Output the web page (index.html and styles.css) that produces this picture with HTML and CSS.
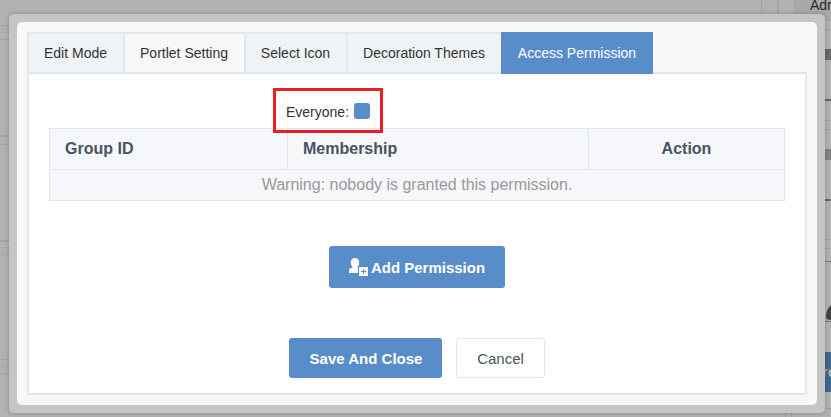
FILE: index.html
```html
<!DOCTYPE html>
<html lang="en">
<head>
<meta charset="utf-8">
<title>Access Permission</title>
<link rel="stylesheet" href="styles.css">
</head>
<body>
<svg class="backdrop" width="831" height="417" viewBox="0 0 831 417" shape-rendering="crispEdges" aria-hidden="true">
  <defs>
    <linearGradient id="bar" x1="0" y1="0" x2="0" y2="1"><stop offset="0" stop-color="#696969"/><stop offset="1" stop-color="#858585"/></linearGradient>
  </defs>
  <g stroke="#9fa4a8" fill="none">
    <path d="M1 25.500h8M2 32.500h7M1 127.500M1 247.500h0M1 247.500h8M2 254.500h7M1 359.500h8M2 366.500h7" stroke-dasharray="3 2"/>
    <path d="M0 39.500h9M0 144.500h9M0 373.500h9"/>
    <path d="M0 136h9M0 241h9" stroke-width="2"/>
    <path d="M761.500 0v14M794.500 0v14M785.500 408v9M791.500 408v9"/>
    <path d="M778 0v14" stroke-width="2"/>
    <path d="M825 20.500h6M825 29.500h6M825 120.500h6M825 129.500h6M825 239.500h6M825 248.500h6M825 408.500h6"/>
  </g>
  <rect x="795" width="36" height="20" fill="#a9a9a9"/>
  <path fill="url(#bar)" d="M825 49h6v11h-6zM825 149h6v11h-6z"/>
  <path stroke="#666" stroke-width="2" d="M825 100h6M825 200h6"/>
  <path stroke="#777" d="M825 261.500h6M825 321.500h6"/>
  <path d="M831 305q-5 4-5 12q0 3 5 3z" fill="#444" shape-rendering="auto"/>
  <rect x="820" y="352" width="11" height="40" fill="#41658e"/>
  <text class="page-heading" x="810" y="10">Adr</text>
  <text class="page-button" x="822" y="377">ro</text>
</svg>
<div class="dialog">
  <div class="dialog-body">
    <nav class="tabs">
      <a class="tab tab-mode">Edit Mode</a>
      <a class="tab tab-setting">Portlet Setting</a>
      <a class="tab tab-icon">Select Icon</a>
      <a class="tab tab-themes">Decoration Themes</a>
      <a class="tab tab-active">Access Permission</a>
    </nav>
    <main class="panel">
      <label class="everyone"><span>Everyone:</span><i class="check"></i></label>
      <table class="grid">
        <colgroup><col class="col-group"><col class="col-member"><col class="col-action"></colgroup>
        <thead><tr><th>Group ID</th><th>Membership</th><th class="center">Action</th></tr></thead>
        <tbody><tr><td colspan="3">Warning: nobody is granted this permission.</td></tr></tbody>
      </table>
      <button class="btn primary add">
        <svg class="user-icon" width="19" height="19" viewBox="0 0 19 19">
          <path fill="#fff" d="M6 0C8.800 0 10.200 1.700 10.200 4.400C10.200 6.300 9.600 7.600 8.600 8.600V9.400L10 10V15H0V12.500C0 10.800 1.500 10.200 3.400 9.500V8.600C2.400 7.600 1.800 6.300 1.800 4.400C1.800 1.700 3.200 0 6 0Z"/>
          <path fill="#588dca" d="M9 8h10v11H9z"/>
          <path fill="#fff" d="M10 9h9v9h-9z"/>
          <path fill="none" stroke="#588dca" d="M12 13.500h5M14.500 11v5"/>
        </svg>Add Permission
      </button>
      <div class="actions">
        <button class="btn primary save">Save And Close</button>
        <button class="btn cancel">Cancel</button>
      </div>
    </main>
  </div>
</div>
</body>
</html>
```
FILE: styles.css
```css
* { box-sizing: border-box; }
body {
  margin: 0;
  width: 831px;
  height: 417px;
  padding: 14px 6px 4px 9px;
  overflow: hidden;
  background: #b2b2b2;
  font: 14px "Liberation Sans", Arial, sans-serif;
  color: #333;
}
.backdrop { position: absolute; left: 0; top: 0; z-index: -1; }
.page-heading { font-size: 14px; fill: #292929; }
.page-button { font-size: 15px; font-weight: bold; fill: #b2b2b2; }
.dialog {
  width: 816px;
  height: 399px;
  padding: 8px;
  background: #c5c5c5;
  border-radius: 5px;
  box-shadow: 0 0 5px rgba(0, 0, 0, .25);
}
.dialog-body {
  height: 383px;
  padding: 10px;
  border-radius: 5px;
  background: #f8f8f8;
}
.tabs { display: flex; height: 40px; }
.tab {
  height: 42px;
  border: 2px solid #e1e8ed;
  border-left: 0;
  background: #eff3f6;
  text-align: center;
  line-height: 38px;
  white-space: nowrap;
  position: relative;
}
.tab-mode { width: 98px; padding-right: 1px; border-left: 2px solid #e1e8ed; }
.tab-setting { width: 121px; padding-right: 1px; background: #f8f8f8; }
.tab-icon { width: 102px; padding-right: 1px; }
.tab-themes { width: 153px; padding-right: 1px; border-right: 0; }
.tab-active { width: 152px; padding-left: 2px; background: #588dca; border-color: #588dca; color: #fff; }
.panel {
  height: 323px;
  padding: 14px 20px 0;
  border: 2px solid #e1e8ed;
  border-radius: 0 0 3px 3px;
  background: #fff;
  display: flex;
  flex-direction: column;
  align-items: center;
}
.everyone {
  align-self: flex-start;
  position: relative;
  z-index: 1;
  display: flex;
  align-items: center;
  justify-content: space-between;
  width: 110px;
  height: 45px;
  margin: 0 0 -5px 224px;
  padding: 0 10px;
  border: 3px solid #ee1c25;
}
.everyone span { padding-top: 2px; }
.check { width: 16px; height: 16px; border-radius: 3px; background: #588dca; }
.grid {
  width: 736px;
  height: 73px;
  table-layout: fixed;
  border-collapse: collapse;
  background: #f5f7fb;
  font-size: 16px;
}
.col-group { width: 238px; }
.col-member { width: 301px; }
.grid th, .grid td { padding: 0 15px; border: 1px solid #e1e8ed; }
.grid th { height: 41px; text-align: left; color: #4a5361; }
.grid .center { text-align: center; }
.grid td { height: 31px; text-align: center; color: #999; }
.btn {
  display: flex;
  align-items: center;
  justify-content: center;
  padding: 0;
  border: 0;
  border-radius: 3px;
  font: 15px "Liberation Sans", Arial, sans-serif;
}
.primary { background: #588dca; color: #fff; font-weight: bold; }
.add { width: 176px; height: 42px; margin-top: 45px; }
.user-icon { margin: 0 3px 0 0; }
.actions { display: flex; gap: 14px; margin-top: 50px; }
.save { width: 153px; height: 40px; padding-left: 1px; }
.cancel { width: 89px; height: 40px; border: 1px solid #e1e8ed; background: #fff; color: #4a5361; }
```
